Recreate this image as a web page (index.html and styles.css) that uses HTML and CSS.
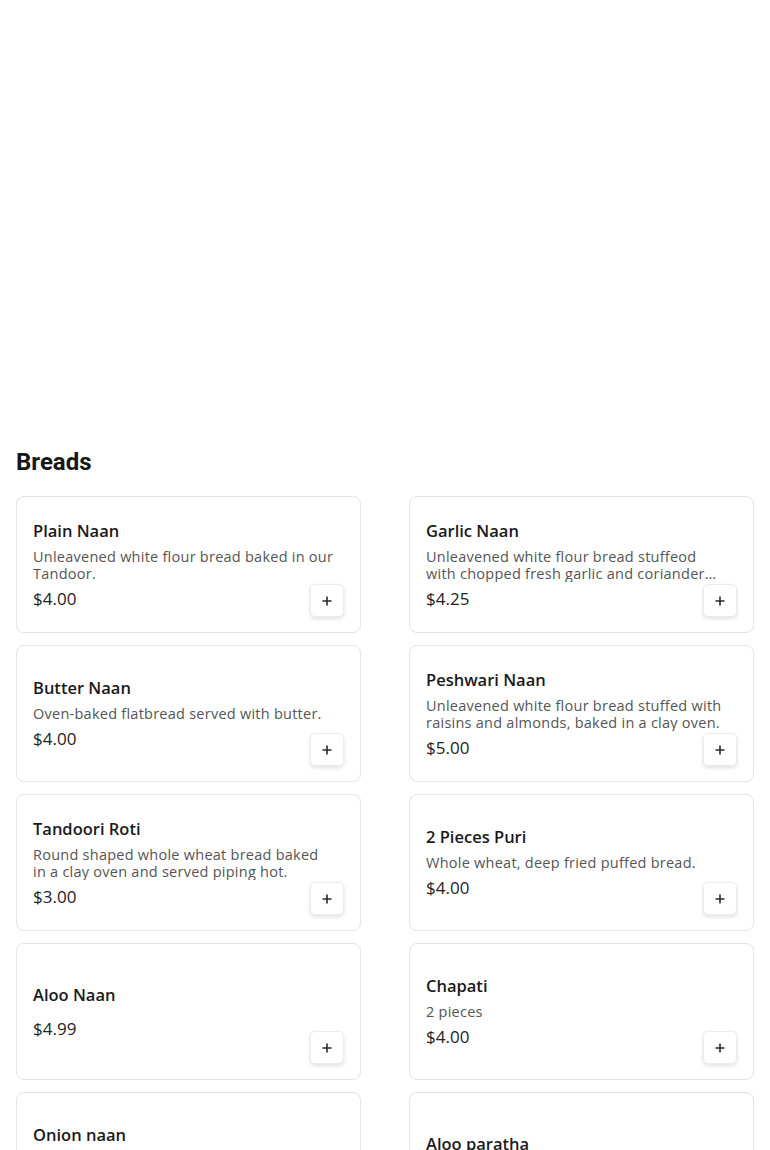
FILE: index.html
```html
<!DOCTYPE html>
<html lang="en">
<head>
<meta charset="utf-8">
<title>Breads</title>
<link rel="stylesheet" href="styles.css">
</head>
<body>
<div class="hero"></div>
<section class="menu-section">
  <h2 class="section-title">Breads</h2>
  <div class="grid">
    <div class="card">
      <div class="info">
        <div class="name">Plain Naan</div>
        <div class="desc">Unleavened white flour bread baked in our Tandoor.</div>
        <div class="price">$4.00</div>
      </div>
      <button class="add" aria-label="Add"><svg viewBox="0 0 10 10" width="10" height="10"><path d="M5 0.5v9M0.5 5h9"/></svg></button>
    </div>
    <div class="card">
      <div class="info">
        <div class="name">Garlic Naan</div>
        <div class="desc">Unleavened white flour bread stuffeod with chopped fresh garlic and coriander leaves, baked in a clay oven.</div>
        <div class="price">$4.25</div>
      </div>
      <button class="add" aria-label="Add"><svg viewBox="0 0 10 10" width="10" height="10"><path d="M5 0.5v9M0.5 5h9"/></svg></button>
    </div>
    <div class="card">
      <div class="info">
        <div class="name">Butter Naan</div>
        <div class="desc">Oven-baked flatbread served with butter.</div>
        <div class="price">$4.00</div>
      </div>
      <button class="add" aria-label="Add"><svg viewBox="0 0 10 10" width="10" height="10"><path d="M5 0.5v9M0.5 5h9"/></svg></button>
    </div>
    <div class="card">
      <div class="info">
        <div class="name">Peshwari Naan</div>
        <div class="desc">Unleavened white flour bread stuffed with raisins and almonds, baked in a clay oven.</div>
        <div class="price">$5.00</div>
      </div>
      <button class="add" aria-label="Add"><svg viewBox="0 0 10 10" width="10" height="10"><path d="M5 0.5v9M0.5 5h9"/></svg></button>
    </div>
    <div class="card">
      <div class="info">
        <div class="name">Tandoori Roti</div>
        <div class="desc">Round shaped whole wheat bread baked in a clay oven and served piping hot.</div>
        <div class="price">$3.00</div>
      </div>
      <button class="add" aria-label="Add"><svg viewBox="0 0 10 10" width="10" height="10"><path d="M5 0.5v9M0.5 5h9"/></svg></button>
    </div>
    <div class="card">
      <div class="info">
        <div class="name">2 Pieces Puri</div>
        <div class="desc">Whole wheat, deep fried puffed bread.</div>
        <div class="price">$4.00</div>
      </div>
      <button class="add" aria-label="Add"><svg viewBox="0 0 10 10" width="10" height="10"><path d="M5 0.5v9M0.5 5h9"/></svg></button>
    </div>
    <div class="card">
      <div class="info">
        <div class="name">Aloo Naan</div>
        <div class="price">$4.99</div>
      </div>
      <button class="add" aria-label="Add"><svg viewBox="0 0 10 10" width="10" height="10"><path d="M5 0.5v9M0.5 5h9"/></svg></button>
    </div>
    <div class="card">
      <div class="info">
        <div class="name">Chapati</div>
        <div class="desc">2 pieces</div>
        <div class="price">$4.00</div>
      </div>
      <button class="add" aria-label="Add"><svg viewBox="0 0 10 10" width="10" height="10"><path d="M5 0.5v9M0.5 5h9"/></svg></button>
    </div>
    <div class="card">
      <div class="info">
        <div class="name">Onion naan</div>
        <div class="desc">Naan stuffed with chopped onions.</div>
        <div class="price">$4.99</div>
      </div>
      <button class="add" aria-label="Add"><svg viewBox="0 0 10 10" width="10" height="10"><path d="M5 0.5v9M0.5 5h9"/></svg></button>
    </div>
    <div class="card">
      <div class="info">
        <div class="name">Aloo paratha</div>
        <div class="price">$4.99</div>
      </div>
      <button class="add" aria-label="Add"><svg viewBox="0 0 10 10" width="10" height="10"><path d="M5 0.5v9M0.5 5h9"/></svg></button>
    </div>
  </div>
</section>
</body>
</html>
```
FILE: styles.css
```css
* { box-sizing: border-box; }
body {
  margin: 0;
  background: #fff;
  font-family: "Open Sans", "Noto Sans", sans-serif;
  color: #1c1c1c;
}
.hero { height: 446px; }
.menu-section { padding: 0 16px 40px; }
.section-title {
  margin: 0 0 18px;
  font-family: Roboto, "Liberation Sans", sans-serif;
  font-weight: 700;
  font-size: 24px;
  line-height: 32px;
  color: #161616;
}
.grid {
  display: grid;
  grid-template-columns: 1fr 1fr;
  column-gap: 48px;
  row-gap: 12px;
}
.card {
  position: relative;
  height: 137px;
  border: 1px solid #e4e4e4;
  border-radius: 8px;
  padding: 16px;
  display: flex;
  align-items: center;
}
.info {
  flex: 1;
  padding-right: 10px;
  min-width: 0;
  display: flex;
  flex-direction: column;
}
.name {
  font-size: 16.5px;
  line-height: 22px;
  font-weight: 600;
  color: #1a1a1a;
  margin-bottom: 6px;
}
.desc {
  font-size: 14.5px;
  line-height: 17px;
  letter-spacing: 0.25px;
  color: #555;
  display: -webkit-box;
  -webkit-line-clamp: 2;
  -webkit-box-orient: vertical;
  overflow: hidden;
}
.price {
  font-size: 17px;
  line-height: 22px;
  color: #222;
  margin-top: 6px;
}
.add {
  position: absolute;
  right: 16px;
  bottom: 15px;
  width: 34px;
  height: 33px;
  padding: 0;
  border: 1px solid #ececec;
  border-radius: 5px;
  background: #fff;
  box-shadow: 0 2px 4px rgba(0,0,0,0.12);
  display: flex;
  align-items: center;
  justify-content: center;
  cursor: pointer;
}
.add svg { display: block; }
.add path {
  stroke: #2a2a2a;
  stroke-width: 1.6;
  fill: none;
}
```
